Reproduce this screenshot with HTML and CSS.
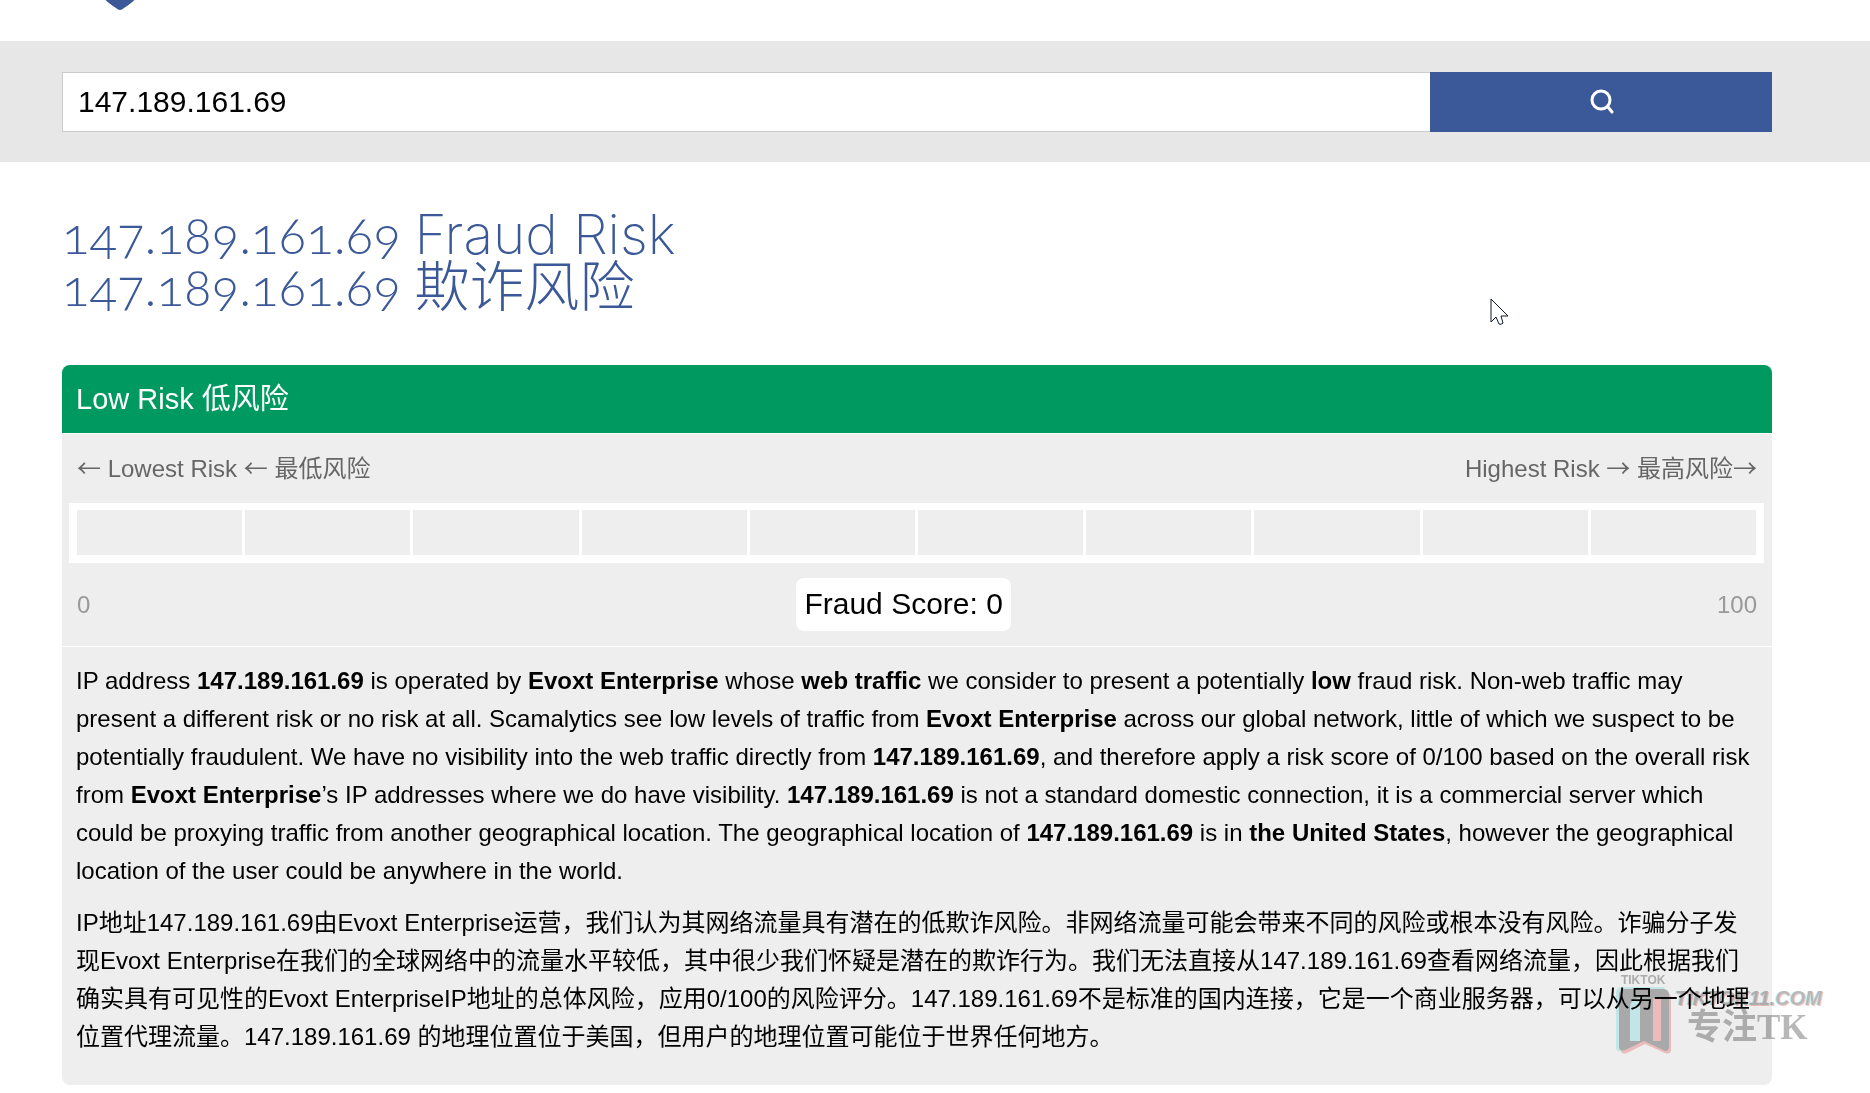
FILE: index.html
```html
<!DOCTYPE html>
<html lang="en">
  <head>
    <meta charset="UTF-8" />
    <meta name="viewport" content="width=device-width, initial-scale=1" />
    <title>147.189.161.69 Fraud Risk</title>
    <link rel="stylesheet" href="styles.css">
  </head>
  <body>
    <header class="header">
      <svg class="logo" viewBox="0 0 44 48" aria-hidden="true">
        <path d="M0 6 L22 0 L44 6 V22 C44 32 38 38 26 46 Q22 50 18 46 C6 38 0 32 0 22 Z" fill="#3b5998"/>
      </svg>
    </header>

    <form class="search">
      <input class="search-input" type="text" aria-label="IP address" value="147.189.161.69">
      <button class="search-button" type="submit" aria-label="Search">
        <svg class="search-icon" viewBox="0 0 26 26" aria-hidden="true">
          <circle cx="13" cy="11" r="9" />
          <path d="M20 18 L24 23" />
        </svg>
      </button>
    </form>

    <main class="content">
      <h1 class="title">147.189.161.69 <span class="title-en">Fraud Risk</span><br>147.189.161.69 <span class="title-cn" lang="zh">欺诈风险</span></h1>

      <section class="card">
        <h2 class="card-header">Low Risk 低风险</h2>
        <div class="labels">
          <span><span class="arrow">←</span> Lowest Risk <span class="arrow">←</span> 最低风险</span>
          <span>Highest Risk <span class="arrow">→</span> 最高风险<span class="arrow">→</span></span>
        </div>
        <div class="bar">
          <div class="cell"></div>
          <div class="cell"></div>
          <div class="cell"></div>
          <div class="cell"></div>
          <div class="cell"></div>
          <div class="cell"></div>
          <div class="cell"></div>
          <div class="cell"></div>
          <div class="cell"></div>
          <div class="cell"></div>
        </div>
        <div class="scores">
          <span>0</span>
          <span class="score">Fraud Score: 0</span>
          <span>100</span>
        </div>
        <div class="text">
          <p>IP address <b>147.189.161.69</b> is operated by <b>Evoxt Enterprise</b> whose <b>web traffic</b> we consider to present a potentially <b>low</b> fraud risk. Non-web traffic may present a different risk or no risk at all. Scamalytics see low levels of traffic from <b>Evoxt Enterprise</b> across our global network, little of which we suspect to be potentially fraudulent. We have no visibility into the web traffic directly from <b>147.189.161.69</b>, and therefore apply a risk score of 0/100 based on the overall risk from <b>Evoxt Enterprise</b>’s IP addresses where we do have visibility. <b>147.189.161.69</b> is not a standard domestic connection, it is a commercial server which could be proxying traffic from another geographical location. The geographical location of <b>147.189.161.69</b> is in <b>the United States</b>, however the geographical location of the user could be anywhere in the world.</p>
          <p lang="zh">IP地址147.189.161.69由Evoxt Enterprise运营，我们认为其网络流量具有潜在的低欺诈风险。非网络流量可能会带来不同的风险或根本没有风险。诈骗分子发现Evoxt Enterprise在我们的全球网络中的流量水平较低，其中很少我们怀疑是潜在的欺诈行为。我们无法直接从147.189.161.69查看网络流量，因此根据我们确实具有可见性的Evoxt EnterpriseIP地址的总体风险，应用0/100的风险评分。147.189.161.69不是标准的国内连接，它是一个商业服务器，可以从另一个地理位置代理流量。147.189.161.69 的地理位置位于美国，但用户的地理位置可能位于世界任何地方。</p>
        </div>
      </section>
    </main>

    <div class="watermark">
      <div class="mark">
        <span class="mark-name">TIKTOK</span>
        <svg class="mark-icon" viewBox="0 0 56 68" aria-hidden="true">
          <path d="M0 6 Q0 0 6 0 H46 Q50 0 50 5 V61 Q50 66 45 64 L27 54 L8 64 Q0 66 0 60 Z" fill="#d0f6f9"/>
          <path d="M5 6 H50 Q55 6 55 11 V62 Q55 68 49 66 L29 57 L11 66 Q5 68 5 63 Z" fill="#fcc8c8"/>
          <path d="M3 8 Q3 2 9 2 H47 Q53 2 53 8 V59 Q53 66 47 63 L28 54 L9 63 Q3 65 3 59 Z" fill="#b5b5b5"/>
          <path d="M14 21 Q14 11 24 11 V54 H14 Z" fill="#d0f6f9"/>
          <path d="M37 11 H45 V54 H37 Z" fill="#fcc8c8"/>
        </svg>
      </div>
      <div class="mark-text">
        <span class="mark-url">TIKTOK11.COM</span>
        <span class="mark-slogan">专注TK</span>
      </div>
    </div>

    <svg class="pointer" viewBox="0 0 19 28" aria-hidden="true">
      <path d="M1 1 V24 L6 19 L9 26 Q11 27 13 25 L11 18 H18 Z" fill="#fff" stroke="#101828"/>
    </svg>
  </body>
</html>
```

FILE: styles.css
```css
* {
  box-sizing: border-box;
}

body {
  margin: 0;
  background-color: #fff;
  color: #000;
  font-family: "Liberation Sans", "Noto Sans CJK SC", sans-serif;
  font-size: 24px;
  line-height: 38px;
}

.header {
  height: 41px;
  padding-left: 98px;
  overflow: hidden;
}

.logo {
  display: block;
  width: 44px;
  height: 48px;
  margin-top: -38px;
}

.search {
  display: flex;
  padding: 31px 98px 30px 62px;
  background-color: #e7e7e7;
}

.search-input {
  width: 80%;
  height: 60px;
  padding: 0 15px;
  border: 1px solid #ccc;
  border-right: 0;
  border-radius: 0;
  font-family: inherit;
  font-size: 30px;
}

.search-button {
  display: flex;
  width: 20%;
  align-items: center;
  justify-content: center;
  border: 0;
  padding: 0;
  background-color: #3b5998;
}

.search-icon {
  width: 26px;
  height: 26px;
  fill: none;
  stroke: #fff;
  stroke-width: 3;
  stroke-linecap: round;
}

.content {
  padding: 0 98px 8px 62px;
}

.title {
  margin: 0;
  padding: 47px 0 53px;
  color: #3b5998;
  font-family: Lato, "Noto Sans CJK SC", sans-serif;
  font-size: 51px;
  font-weight: 300;
  font-variant-numeric: oldstyle-nums;
  line-height: 51px;
}

.title-en {
  font-family: Inter, sans-serif;
  font-size: 55px;
  font-weight: 200;
}

.title-cn {
  font-size: 55px;
}

.card {
  border-radius: 8px;
  background-color: #eee;
  overflow: hidden;
}

.card-header {
  margin: 0;
  padding: 15px 14px;
  border-bottom: 1px solid #fff;
  background-color: #009a60;
  color: #fff;
  font-size: 29px;
  font-weight: normal;
}

.labels {
  display: flex;
  justify-content: space-between;
  padding: 14px 15px 15px;
  color: #666;
}

.arrow {
  font-family: "Noto Sans CJK SC", sans-serif;
}

.bar {
  display: flex;
  gap: 3px;
  margin: 0 8px 0 7px;
  padding: 7px 8px 8px;
  background-color: #fff;
}

.cell {
  flex: 1;
  height: 45px;
  background-color: #eee;
}

.scores {
  display: flex;
  align-items: center;
  justify-content: space-between;
  padding: 15px;
  border-bottom: 1px solid #fff;
  color: #999;
}

.score {
  padding: 7px 8px 8px;
  border-radius: 8px;
  background-color: #fff;
  color: #000;
  font-size: 30px;
}

.text {
  padding: 15px 14px 29px;
}

.text p {
  margin: 0;
}

.text p + p {
  margin-top: 14px;
}

/* overlays */
.watermark {
  position: absolute;
  top: 974px;
  right: 48px;
  display: flex;
  gap: 3px;
  color: #b8b8b8;
  mix-blend-mode: multiply;
}

.mark-name,
.mark-url,
.mark-slogan,
.mark-icon {
  display: block;
}

.mark-name {
  padding-left: 5px;
  font-size: 12px;
  font-weight: bold;
  line-height: 13px;
}

.mark-icon {
  width: 56px;
  height: 68px;
}

.mark-text {
  padding-top: 13px;
}

.mark-url {
  font-size: 20px;
  font-style: italic;
  font-weight: bold;
  line-height: 22px;
  text-shadow: -1px 0 #c8f2f5, 1px 1px #f8c4c4;
}

.mark-slogan {
  padding-left: 12px;
  font-family: "Liberation Serif", "Noto Sans CJK SC", serif;
  font-size: 35px;
  font-weight: bold;
}

.pointer {
  position: absolute;
  top: 298px;
  left: 1490px;
  width: 19px;
  height: 28px;
}
```
